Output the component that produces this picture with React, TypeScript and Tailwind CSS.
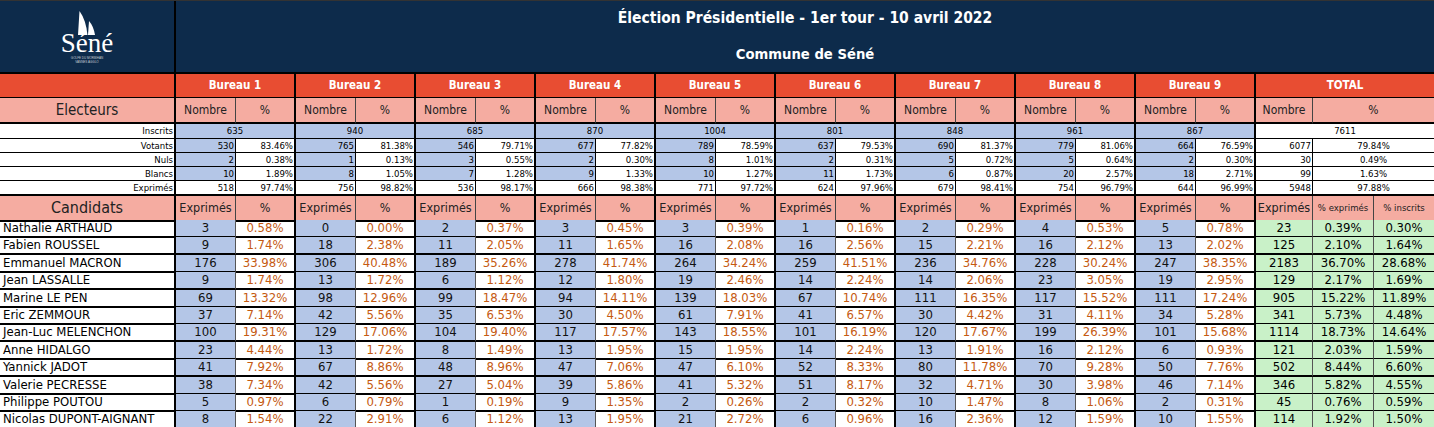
import React from "react";

const COLS = "grid grid-cols-[176px_repeat(18,60px)_57px_61px_60px]";
const FONT = "font-['DejaVu_Sans_Condensed','Noto_Sans',sans-serif]";

const inscrits = ["635", "940", "685", "870", "1004", "801", "848", "961", "867"];
type Pair = [string, string];
const smallRows: { label: string; data: Pair[]; total: Pair; blue: boolean }[] = [
  {
    label: "Votants",
    blue: true,
    data: [["530", "83.46%"], ["765", "81.38%"], ["546", "79.71%"], ["677", "77.82%"], ["789", "78.59%"], ["637", "79.53%"], ["690", "81.37%"], ["779", "81.06%"], ["664", "76.59%"]],
    total: ["6077", "79.84%"],
  },
  {
    label: "Nuls",
    blue: true,
    data: [["2", "0.38%"], ["1", "0.13%"], ["3", "0.55%"], ["2", "0.30%"], ["8", "1.01%"], ["2", "0.31%"], ["5", "0.72%"], ["5", "0.64%"], ["2", "0.30%"]],
    total: ["30", "0.49%"],
  },
  {
    label: "Blancs",
    blue: true,
    data: [["10", "1.89%"], ["8", "1.05%"], ["7", "1.28%"], ["9", "1.33%"], ["10", "1.27%"], ["11", "1.73%"], ["6", "0.87%"], ["20", "2.57%"], ["18", "2.71%"]],
    total: ["99", "1.63%"],
  },
  {
    label: "Exprimés",
    blue: false,
    data: [["518", "97.74%"], ["756", "98.82%"], ["536", "98.17%"], ["666", "98.38%"], ["771", "97.72%"], ["624", "97.96%"], ["679", "98.41%"], ["754", "96.79%"], ["644", "96.99%"]],
    total: ["5948", "97.88%"],
  },
];

const candidates: { name: string; data: Pair[]; total: [string, string, string] }[] = [
  { name: "Nathalie ARTHAUD", data: [["3", "0.58%"], ["0", "0.00%"], ["2", "0.37%"], ["3", "0.45%"], ["3", "0.39%"], ["1", "0.16%"], ["2", "0.29%"], ["4", "0.53%"], ["5", "0.78%"]], total: ["23", "0.39%", "0.30%"] },
  { name: "Fabien ROUSSEL", data: [["9", "1.74%"], ["18", "2.38%"], ["11", "2.05%"], ["11", "1.65%"], ["16", "2.08%"], ["16", "2.56%"], ["15", "2.21%"], ["16", "2.12%"], ["13", "2.02%"]], total: ["125", "2.10%", "1.64%"] },
  { name: "Emmanuel MACRON", data: [["176", "33.98%"], ["306", "40.48%"], ["189", "35.26%"], ["278", "41.74%"], ["264", "34.24%"], ["259", "41.51%"], ["236", "34.76%"], ["228", "30.24%"], ["247", "38.35%"]], total: ["2183", "36.70%", "28.68%"] },
  { name: "Jean LASSALLE", data: [["9", "1.74%"], ["13", "1.72%"], ["6", "1.12%"], ["12", "1.80%"], ["19", "2.46%"], ["14", "2.24%"], ["14", "2.06%"], ["23", "3.05%"], ["19", "2.95%"]], total: ["129", "2.17%", "1.69%"] },
  { name: "Marine LE PEN", data: [["69", "13.32%"], ["98", "12.96%"], ["99", "18.47%"], ["94", "14.11%"], ["139", "18.03%"], ["67", "10.74%"], ["111", "16.35%"], ["117", "15.52%"], ["111", "17.24%"]], total: ["905", "15.22%", "11.89%"] },
  { name: "Eric ZEMMOUR", data: [["37", "7.14%"], ["42", "5.56%"], ["35", "6.53%"], ["30", "4.50%"], ["61", "7.91%"], ["41", "6.57%"], ["30", "4.42%"], ["31", "4.11%"], ["34", "5.28%"]], total: ["341", "5.73%", "4.48%"] },
  { name: "Jean-Luc MELENCHON", data: [["100", "19.31%"], ["129", "17.06%"], ["104", "19.40%"], ["117", "17.57%"], ["143", "18.55%"], ["101", "16.19%"], ["120", "17.67%"], ["199", "26.39%"], ["101", "15.68%"]], total: ["1114", "18.73%", "14.64%"] },
  { name: "Anne HIDALGO", data: [["23", "4.44%"], ["13", "1.72%"], ["8", "1.49%"], ["13", "1.95%"], ["15", "1.95%"], ["14", "2.24%"], ["13", "1.91%"], ["16", "2.12%"], ["6", "0.93%"]], total: ["121", "2.03%", "1.59%"] },
  { name: "Yannick JADOT", data: [["41", "7.92%"], ["67", "8.86%"], ["48", "8.96%"], ["47", "7.06%"], ["47", "6.10%"], ["52", "8.33%"], ["80", "11.78%"], ["70", "9.28%"], ["50", "7.76%"]], total: ["502", "8.44%", "6.60%"] },
  { name: "Valerie PECRESSE", data: [["38", "7.34%"], ["42", "5.56%"], ["27", "5.04%"], ["39", "5.86%"], ["41", "5.32%"], ["51", "8.17%"], ["32", "4.71%"], ["30", "3.98%"], ["46", "7.14%"]], total: ["346", "5.82%", "4.55%"] },
  { name: "Philippe POUTOU", data: [["5", "0.97%"], ["6", "0.79%"], ["1", "0.19%"], ["9", "1.35%"], ["2", "0.26%"], ["2", "0.32%"], ["10", "1.47%"], ["8", "1.06%"], ["2", "0.31%"]], total: ["45", "0.76%", "0.59%"] },
  { name: "Nicolas DUPONT-AIGNANT", data: [["8", "1.54%"], ["22", "2.91%"], ["6", "1.12%"], ["13", "1.95%"], ["21", "2.72%"], ["6", "0.96%"], ["16", "2.36%"], ["12", "1.59%"], ["10", "1.55%"]], total: ["114", "1.92%", "1.50%"] },
];

function Logo() {
  return (
    <div className="flex flex-col items-center">
      <svg width="20" height="25" viewBox="0 0 20 25" className="mb-[-4px] ml-[-2px]">
        <path d="M2 24 L3.5 0 Q10 9 11.5 24 Z" fill="#ffffff" />
        <path d="M12 24 L13 10 Q17.5 15 19 24 Z" fill="#ffffff" />
      </svg>
      <div className="font-['Liberation_Serif',serif] text-[27px] leading-[22px] text-white">Séné</div>
      <div className="mt-[2px] text-[3px] leading-[4px] text-[#c8ccd4] font-['Liberation_Sans',sans-serif] text-center">
        GOLFE DU MORBIHAN
        <br />
        VANNES AGGLO
      </div>
    </div>
  );
}

export default function App() {
  const bureaux = [1, 2, 3, 4, 5, 6, 7, 8, 9];
  return (
    <div className={`w-[1434px] h-[427px] overflow-hidden bg-white text-black ${FONT}`}>
      {/* Header */}
      <div className="flex h-[74px] bg-[#0d2b4b] border-t border-[#333] border-b-2 border-b-black">
        <div className="w-[176px] shrink-0 border-r-2 border-black flex items-center justify-center pt-[1px]">
          <Logo />
        </div>
        <div className="flex-1 flex flex-col items-center text-white font-bold leading-[18px] pt-[8px]">
          <div className="text-[15.5px]">Élection Présidentielle - 1er tour - 10 avril 2022</div>
          <div className="mt-[18px] text-[14.7px]">Commune de Séné</div>
        </div>
      </div>

      {/* Bureau row */}
      <div className={`${COLS} h-[24px] bg-[#e84d32] text-white font-bold text-[11.5px]`}>
        <div className="border-r-2 border-b border-black" />
        {bureaux.map((b) => (
          <div key={b} className="col-span-2 flex items-center justify-center border-r-2 border-b border-black">
            Bureau {b}
          </div>
        ))}
        <div className="col-span-3 flex items-center justify-center border-b border-black">TOTAL</div>
      </div>

      {/* Electeurs row */}
      <div className={`${COLS} h-[26px] bg-[#f5aca1] text-[12px] text-[#222]`}>
        <div className="flex items-center justify-center text-[15px] border-r-2 border-b-2 border-black">Electeurs</div>
        {bureaux.map((b) => (
          <React.Fragment key={b}>
            <div className="flex items-center justify-center border-r border-b-2 border-[#444] border-b-black">Nombre</div>
            <div className="flex items-center justify-center border-r-2 border-b-2 border-black">%</div>
          </React.Fragment>
        ))}
        <div className="flex items-center justify-center border-r border-b-2 border-[#444] border-b-black">Nombre</div>
        <div className="col-span-2 flex items-center justify-center border-b-2 border-black">%</div>
      </div>

      {/* Inscrits */}
      <div className={`${COLS} h-[15px] text-[9.5px] leading-[14px]`}>
        <div className="flex items-center justify-end pr-[1px] border-r-2 border-b border-black">Inscrits</div>
        {inscrits.map((v, i) => (
          <div key={i} className="col-span-2 flex items-center justify-center bg-[#b4c6e7] border-r-2 border-b border-black">
            {v}
          </div>
        ))}
        <div className="col-span-3 flex items-center justify-center border-b border-black">7611</div>
      </div>

      {smallRows.map((r) => (
        <div key={r.label} className={`${COLS} h-[14px] text-[9.5px] leading-[13px]`}>
          <div className="flex items-center justify-end pr-[1px] border-r-2 border-b border-black">{r.label}</div>
          {r.data.map(([n, p], i) => (
            <React.Fragment key={i}>
              <div className={`flex items-center justify-end pr-[1px] border-r border-b border-black ${r.blue ? "bg-[#b4c6e7]" : ""}`}>{n}</div>
              <div className="flex items-center justify-end pr-[1px] border-r-2 border-b border-black">{p}</div>
            </React.Fragment>
          ))}
          <div className="flex items-center justify-end pr-[1px] border-r border-b border-black">{r.total[0]}</div>
          <div className="col-span-2 flex items-center justify-center border-b border-black">{r.total[1]}</div>
        </div>
      ))}

      {/* Candidats header */}
      <div className={`${COLS} h-[25px] bg-[#f5aca1] text-[12.5px] text-[#222] border-t border-black`}>
        <div className="flex items-center justify-center text-[16px] border-r-2 border-b-2 border-black">Candidats</div>
        {bureaux.map((b) => (
          <React.Fragment key={b}>
            <div className="flex items-center justify-center border-r border-b-2 border-[#444] border-b-black">Exprimés</div>
            <div className="flex items-center justify-center border-r-2 border-b-2 border-black">%</div>
          </React.Fragment>
        ))}
        <div className="flex items-center justify-center border-r border-b-2 border-[#444] border-b-black">Exprimés</div>
        <div className="flex items-center justify-center text-[9.5px] border-r border-b-2 border-[#444] border-b-black">% exprimés</div>
        <div className="flex items-center justify-center text-[9.5px] border-b-2 border-black">% inscrits</div>
      </div>

      {/* Candidates */}
      {candidates.map((c) => (
        <div key={c.name} className={`${COLS} h-[17.4px] text-[13px] leading-[16px]`}>
          <div className="flex items-center pl-[3px] border-r-2 border-b-2 border-black whitespace-nowrap">{c.name}</div>
          {c.data.map(([n, p], i) => (
            <React.Fragment key={i}>
              <div className="flex items-center justify-center bg-[#b4c6e7] text-[#111] border-r border-b-2 border-[#555] border-b-black">{n}</div>
              <div className="flex items-center justify-center text-[#c55a11] border-r-2 border-b-2 border-black">{p}</div>
            </React.Fragment>
          ))}
          <div className="flex items-center justify-center bg-[#c9f1c8] border-r border-b-2 border-[#555] border-b-black">{c.total[0]}</div>
          <div className="flex items-center justify-center bg-[#c9f1c8] border-r border-b-2 border-[#555] border-b-black">{c.total[1]}</div>
          <div className="flex items-center justify-center bg-[#c9f1c8] border-b-2 border-black">{c.total[2]}</div>
        </div>
      ))}
    </div>
  );
}
